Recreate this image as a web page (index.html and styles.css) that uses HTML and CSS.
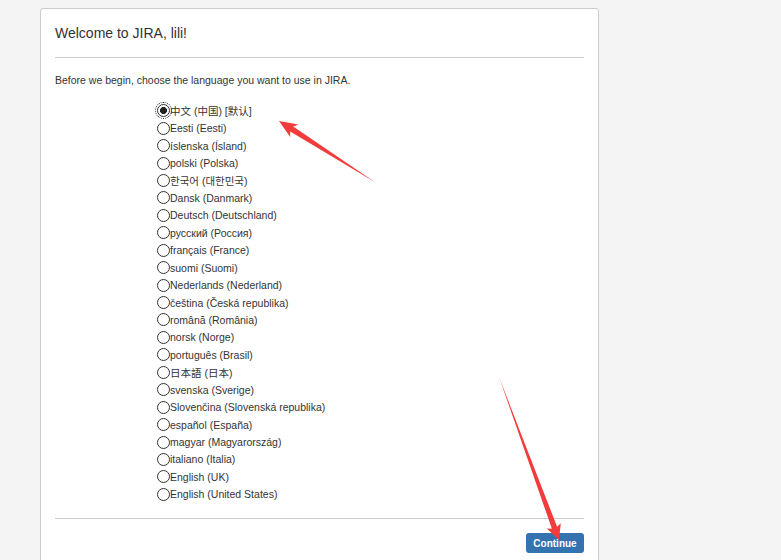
FILE: index.html
```html
<!DOCTYPE html>
<html lang="en">
<head>
<meta charset="utf-8">
<title>Welcome to JIRA</title>
<link rel="stylesheet" href="styles.css">
</head>
<body>
<div class="card">
  <div class="card-header">
    <h1 class="title">Welcome to JIRA, lili!</h1>
  </div>
  <p class="intro">Before we begin, choose the language you want to use in JIRA.</p>
  <form class="lang-list">
    <label class="lang"><input type="radio" name="lang" class="radio focused" checked><span>中文 (中国) [默认]</span></label>
    <label class="lang"><input type="radio" name="lang" class="radio"><span>Eesti (Eesti)</span></label>
    <label class="lang"><input type="radio" name="lang" class="radio"><span>íslenska (Ísland)</span></label>
    <label class="lang"><input type="radio" name="lang" class="radio"><span>polski (Polska)</span></label>
    <label class="lang"><input type="radio" name="lang" class="radio"><span>한국어 (대한민국)</span></label>
    <label class="lang"><input type="radio" name="lang" class="radio"><span>Dansk (Danmark)</span></label>
    <label class="lang"><input type="radio" name="lang" class="radio"><span>Deutsch (Deutschland)</span></label>
    <label class="lang"><input type="radio" name="lang" class="radio"><span>русский (Россия)</span></label>
    <label class="lang"><input type="radio" name="lang" class="radio"><span>français (France)</span></label>
    <label class="lang"><input type="radio" name="lang" class="radio"><span>suomi (Suomi)</span></label>
    <label class="lang"><input type="radio" name="lang" class="radio"><span>Nederlands (Nederland)</span></label>
    <label class="lang"><input type="radio" name="lang" class="radio"><span>čeština (Česká republika)</span></label>
    <label class="lang"><input type="radio" name="lang" class="radio"><span>română (România)</span></label>
    <label class="lang"><input type="radio" name="lang" class="radio"><span>norsk (Norge)</span></label>
    <label class="lang"><input type="radio" name="lang" class="radio"><span>português (Brasil)</span></label>
    <label class="lang"><input type="radio" name="lang" class="radio"><span>日本語 (日本)</span></label>
    <label class="lang"><input type="radio" name="lang" class="radio"><span>svenska (Sverige)</span></label>
    <label class="lang"><input type="radio" name="lang" class="radio"><span>Slovenčina (Slovenská republika)</span></label>
    <label class="lang"><input type="radio" name="lang" class="radio"><span>español (España)</span></label>
    <label class="lang"><input type="radio" name="lang" class="radio"><span>magyar (Magyarország)</span></label>
    <label class="lang"><input type="radio" name="lang" class="radio"><span>italiano (Italia)</span></label>
    <label class="lang"><input type="radio" name="lang" class="radio"><span>English (UK)</span></label>
    <label class="lang"><input type="radio" name="lang" class="radio"><span>English (United States)</span></label>
  </form>
  <div class="card-footer">
    <button type="button" class="btn-primary">Continue</button>
  </div>
</div>
<svg class="annotations" width="781" height="560" viewBox="0 0 781 560" aria-hidden="true">
  <polygon class="arrow" points="279,121 298.5,124.5 293.2,126.6 375.5,182.5 290.2,131.4 290.2,137"/>
  <polygon class="arrow" points="559,540 546.8,528.6 551.9,528.8 499,377 557.1,526.8 560.8,523.2"/>
</svg>
</body>
</html>
```
FILE: styles.css
```css
html, body {
  margin: 0;
  padding: 0;
}
body {
  background: #f4f4f4;
  font-family: "Liberation Sans", Arial, "Noto Sans CJK SC", sans-serif;
  color: #333;
  height: 560px;
  overflow: hidden;
  position: relative;
}
.card {
  box-sizing: border-box;
  width: 559px;
  margin: 8px 0 0 40px;
  padding: 14px 14px 40px;
  background: #fff;
  border: 1px solid #ccc;
  border-radius: 3px;
}
.card-header {
  padding: 0 0 14px;
  border-bottom: 1px solid #ccc;
}
.title {
  margin: 0;
  font-size: 14px;
  line-height: 20px;
  font-weight: normal;
  color: #333;
}
.intro {
  margin: 15px 0 15px;
  font-size: 10.5px;
  line-height: 14px;
}
.lang-list {
  margin: 0;
  padding: 0 0 15px 102px;
  border-bottom: 1px solid #ccc;
}
.lang {
  display: flex;
  align-items: center;
  height: 17.45px;
  font-size: 10.5px;
  color: #333;
}
.radio {
  -webkit-appearance: none;
  appearance: none;
  box-sizing: border-box;
  width: 13px;
  height: 13px;
  margin: 0;
  border: 1px solid #333;
  border-radius: 50%;
  background: #fff;
  flex: none;
}
.radio:checked {
  background: radial-gradient(circle, #222 0 3.2px, #fff 3.8px);
}
.radio.focused {
  outline: 1px dotted #222;
  outline-offset: 1px;
}
.card-footer {
  display: flex;
  justify-content: flex-end;
  padding-top: 14px;
}
.btn-primary {
  box-sizing: border-box;
  width: 58px;
  height: 20px;
  padding: 0;
  border: none;
  border-radius: 3px;
  background: #3572b0;
  color: #fff;
  font-family: "Liberation Sans", Arial, sans-serif;
  font-size: 10px;
  font-weight: bold;
}
.annotations {
  position: absolute;
  left: 0;
  top: 0;
  pointer-events: none;
}
.arrow {
  fill: #f23c3c;
}
```
